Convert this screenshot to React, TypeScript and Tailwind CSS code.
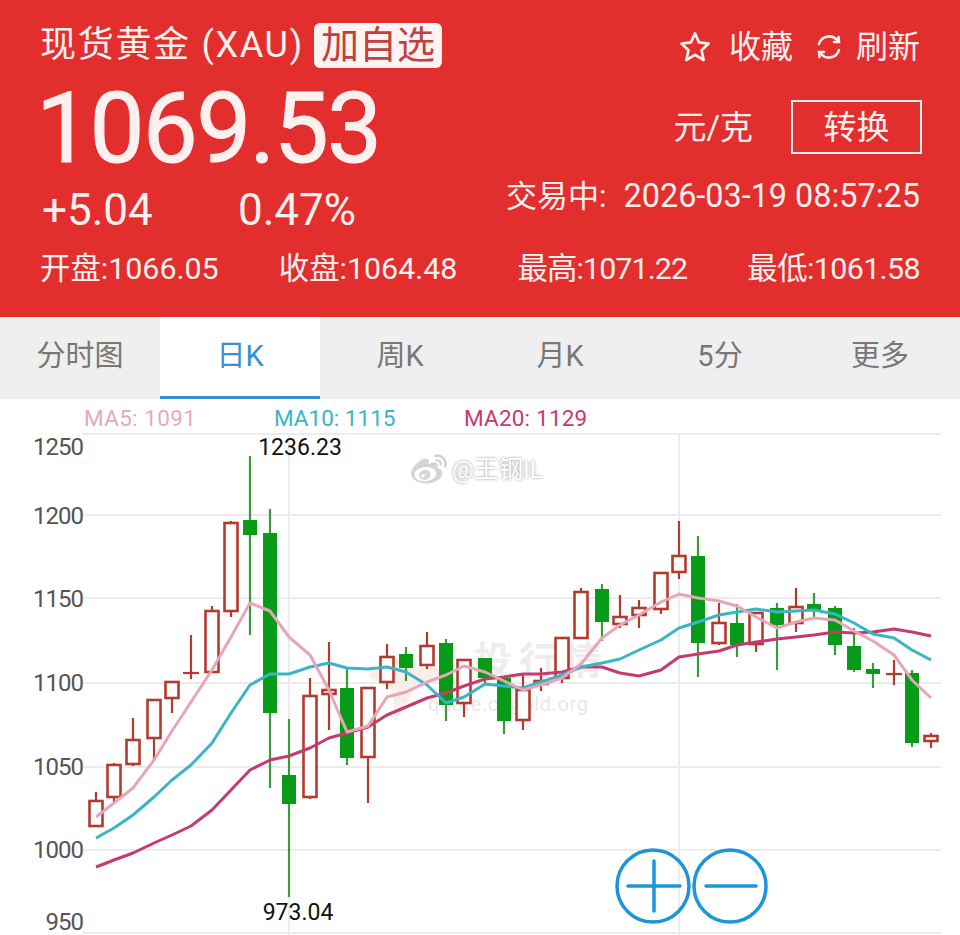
import React from 'react';
import { FaWeibo } from 'react-icons/fa';

type Candle = [number, number, number, number, number, 'r' | 'g'];

// x, bodyTop, bodyBottom, wickTop, wickBottom, colour
const candles: Candle[] = [
  [96, 801, 826, 792, 826, 'r'],
  [114, 765, 797, 763, 802, 'r'],
  [133, 740, 764, 718, 766, 'r'],
  [154, 700, 738, 699, 760, 'r'],
  [172, 682, 698, 681, 713, 'r'],
  [191, 673, 673, 635, 679, 'r'],
  [212, 611, 672, 606, 672, 'r'],
  [231, 523, 611, 521, 617, 'r'],
  [250, 520, 535, 456, 635, 'g'],
  [270, 533, 713, 509, 788, 'g'],
  [289, 775, 804, 719, 897, 'g'],
  [310, 696, 797, 678, 799, 'r'],
  [329, 690, 694, 642, 730, 'r'],
  [347, 688, 758, 668, 765, 'g'],
  [368, 688, 757, 688, 803, 'r'],
  [387, 657, 682, 644, 689, 'r'],
  [406, 654, 668, 647, 681, 'g'],
  [427, 646, 665, 632, 669, 'r'],
  [446, 643, 705, 639, 721, 'g'],
  [464, 660, 703, 659, 717, 'r'],
  [485, 658, 678, 658, 685, 'g'],
  [504, 678, 721, 677, 734, 'g'],
  [523, 690, 720, 673, 730, 'r'],
  [541, 681, 684, 668, 691, 'r'],
  [562, 638, 678, 637, 683, 'r'],
  [581, 592, 638, 588, 638, 'r'],
  [602, 589, 622, 584, 641, 'g'],
  [620, 617, 624, 595, 628, 'r'],
  [639, 608, 615, 600, 628, 'r'],
  [661, 573, 609, 573, 614, 'r'],
  [679, 556, 572, 521, 579, 'r'],
  [698, 556, 643, 536, 677, 'g'],
  [719, 623, 643, 603, 645, 'r'],
  [737, 623, 645, 604, 657, 'g'],
  [756, 613, 644, 613, 652, 'r'],
  [777, 608, 625, 603, 670, 'g'],
  [796, 607, 623, 588, 632, 'r'],
  [814, 604, 611, 593, 618, 'g'],
  [835, 608, 645, 606, 655, 'g'],
  [854, 646, 670, 628, 672, 'g'],
  [873, 669, 674, 663, 688, 'g'],
  [894, 674, 674, 660, 685, 'r'],
  [912, 673, 743, 670, 747, 'g'],
  [931, 736, 741, 733, 748, 'r'],
];

const ma5 =
  '96,817 114,803 133,788 154,760 172,731 191,702 212,670 231,637 250,603 270,611 289,637 310,655 329,690 347,732 368,726 387,697 406,692 427,682 446,675 464,666 485,672 504,681 523,690 541,685 562,678 581,664 602,638 620,625 639,615 661,602 679,594 698,598 719,601 737,606 756,617 777,628 796,622 814,618 835,620 854,631 873,641 894,655 912,680 931,698';
const ma10 =
  '96,838 114,828 133,815 154,797 172,780 191,765 212,743 231,713 250,685 270,674 289,674 310,667 329,663 347,668 368,669 387,667 406,672 427,685 446,703 464,697 485,684 504,686 523,688 541,682 562,675 581,667 602,663 620,659 639,650 661,640 679,628 698,622 719,615 737,612 756,609 777,612 796,611 814,610 835,614 854,623 873,634 894,638 912,650 931,660';
const ma20 =
  '96,867 114,860 133,853 154,843 172,835 191,826 212,810 231,790 250,770 270,760 289,756 310,748 329,738 347,733 368,727 387,715 406,707 427,698 446,693 464,686 485,679 504,677 523,674 541,674 562,672 581,667 602,667 620,673 639,676 661,670 679,657 698,654 719,651 737,645 756,642 777,639 796,637 814,635 835,632 854,633 873,632 894,629 912,632 931,636';

const axis: [string, number][] = [
  ['1250', 446],
  ['1200', 515],
  ['1150', 598],
  ['1100', 682],
  ['1050', 766],
  ['1000', 849],
  ['950', 921],
];

const grid = [434, 515, 598, 683, 767, 850, 933];
const tabs = ['分时图', '日K', '周K', '月K', '5分', '更多'];
const stats = [
  { text: '开盘:1066.05', cls: '' },
  { text: '收盘:1064.48', cls: '' },
  { text: '最高:1071.22', cls: 'tracking-[-0.9px]' },
  { text: '最低:1061.58', cls: 'tracking-[-0.6px]' },
];

const Chart: React.FC = () => (
  <svg viewBox="0 433 960 502" className="block w-[960px] h-[502px]">
    {/* watermark */}
    <path d="M368 676 L392 655 L418 668 L470 668 L415 690 L395 722 L392 690 Z" fill="#fbeee9" />
    <text x="474" y="674" fontSize="38" fontWeight="700" letterSpacing="7" fill="#efecec">投行情</text>
    <text x="428" y="711" fontSize="20" letterSpacing="0.6" fill="#ebe8e8">quote.cngold.org</text>

    {grid.map((y) => (
      <line key={y} x1="82" x2="941" y1={y} y2={y} stroke="#ececec" strokeWidth="2" />
    ))}
    <line x1="289" x2="289" y1="433" y2="935" stroke="#ececec" strokeWidth="2" />
    <line x1="679" x2="679" y1="433" y2="935" stroke="#ececec" strokeWidth="2" />

    {axis.map(([label, y]) => (
      <text key={label} x="83" y={y + 9} textAnchor="end" fontSize="24" letterSpacing="-1" fill="#555555">{label}</text>
    ))}

    {candles.map(([x, top, bottom, wickTop, wickBottom, colour]) =>
      colour === 'g' ? (
        <g key={x}>
          <line x1={x} x2={x} y1={wickTop} y2={wickBottom} stroke="#3c9a3c" strokeWidth="2.2" />
          <rect x={x - 7} y={top} width="14" height={bottom - top} fill="#079b17" />
        </g>
      ) : top === bottom ? (
        <g key={x} stroke="#b53a2e" strokeWidth="2.2">
          <line x1={x} x2={x} y1={wickTop} y2={wickBottom} />
          <line x1={x - 8} x2={x + 8} y1={top} y2={top} />
        </g>
      ) : (
        <g key={x}>
          <line x1={x} x2={x} y1={wickTop} y2={top} stroke="#b53a2e" strokeWidth="2.2" />
          <line x1={x} x2={x} y1={bottom} y2={wickBottom} stroke="#b53a2e" strokeWidth="2.2" />
          <rect x={x - 6.5} y={top} width="13" height={bottom - top} fill="#ffffff" stroke="#b53a2e" strokeWidth="2.6" />
        </g>
      )
    )}

    <polyline points={ma20} fill="none" stroke="#c63a70" strokeWidth="3" strokeLinejoin="round" />
    <polyline points={ma10} fill="none" stroke="#3ab5c6" strokeWidth="3" strokeLinejoin="round" />
    <polyline points={ma5} fill="none" stroke="#e6a6ba" strokeWidth="3" strokeLinejoin="round" />

    <text x="300" y="455" textAnchor="middle" fontSize="23" fill="#111111">1236.23</text>
    <text x="298" y="920" textAnchor="middle" fontSize="23" fill="#111111">973.04</text>

    {/* zoom buttons */}
    <g fill="none" stroke="#1c96d8" strokeWidth="3.5">
      <circle cx="653" cy="886" r="36" />
      <circle cx="730" cy="886" r="36" />
      <path d="M628 886 H680 M654 861 V911" strokeLinecap="round" />
      <path d="M706 886 H756" strokeLinecap="round" />
    </g>
  </svg>
);

const App: React.FC = () => {
  return (
    <div className="relative w-[960px] h-[935px] overflow-hidden bg-white font-['Roboto','Noto_Sans_CJK_SC',sans-serif]">
      {/* Header */}
      <div className="h-[317px] bg-[#e32e2e] px-10 text-[#fdf0ef]">
        <div className="flex justify-between">
          <div>
            <div className="flex items-center h-[50px] mt-5">
              <span className="text-[36px] tracking-[1.7px] leading-none">现货黄金 (XAU)</span>
              <span className="ml-[10px] h-[45px] w-[128px] rounded-md bg-[#fdf3f2] text-[#c0413f] text-[38px] leading-[45px] text-center">加自选</span>
            </div>
            <div className="mt-[8px] -ml-1 h-[102px] text-[98px] leading-[102px] tracking-[-1.7px] [-webkit-text-stroke:1px_#fdf0ef]">1069.53</div>
            <div className="mt-[5px] flex text-[44px] leading-[50px]">
              <span className="w-[198px] pl-[2px]">+5.04</span>
              <span>0.47%</span>
            </div>
          </div>
          <div className="flex flex-col items-end">
            <div className="mt-[24px] flex items-center h-[46px] text-[32px] leading-none">
              <svg viewBox="0 0 30 30" className="w-[34px] h-[34px]" fill="none" stroke="currentColor" strokeWidth="2.4" strokeLinejoin="round">
                <path d="M15 3 L18.6 11 L27 12 L20.8 17.8 L22.6 26.5 L15 22 L7.4 26.5 L9.2 17.8 L3 12 L11.4 11 Z" />
              </svg>
              <span className="ml-[17px]">收藏</span>
              <svg viewBox="0 0 28 28" className="ml-[22px] w-[28px] h-[28px]" fill="none" stroke="currentColor" strokeWidth="2.6" strokeLinecap="round">
                <path d="M4 11 A10.5 10.5 0 0 1 22 7" />
                <path d="M24 17 A10.5 10.5 0 0 1 6 21" />
                <path d="M19 9 L24 9 L23.5 4" />
                <path d="M9 19 L4 19 L4.5 24" />
              </svg>
              <span className="ml-[13px]">刷新</span>
            </div>
            <div className="mt-[30px] -mr-[2px] flex items-center text-[33px] leading-none">
              <span className="mr-[38px]">元/克</span>
              <div className="w-[131px] h-[54px] border-2 border-[#fdf0ef] flex items-center justify-center">转换</div>
            </div>
            <div className="mt-[24px] flex items-center h-[36px] text-[31px] leading-none">
              <span>交易中:</span>
              <span className="ml-[17px] text-[32.4px]">2026-03-19 08:57:25</span>
            </div>
          </div>
        </div>
        <div className="mt-[14px] flex justify-between text-[30.4px] leading-[40px]">
          {stats.map((s) => (
            <span key={s.text} className={s.cls}>{s.text}</span>
          ))}
        </div>
      </div>

      {/* Tabs */}
      <div className="flex h-[82px] bg-[#efefef]">
        {tabs.map((t) => (
          <div
            key={t}
            className={
              t === '日K'
                ? 'flex-1 flex items-center justify-center bg-white border-b-[3px] border-[#3b8fd0] text-[#3a8fd6] text-[29px]'
                : 'flex-1 flex items-center justify-center border-b-[3px] border-transparent text-[#777777] text-[29px]'
            }
          >
            {t}
          </div>
        ))}
      </div>

      {/* Legend */}
      <div className="flex h-[34px] items-center pt-1 pl-[84px] text-[22.5px] leading-none">
        <span className="w-[190px] text-[#e8a9bd] tracking-[0.4px]">MA5: 1091</span>
        <span className="w-[190px] text-[#3ab5c6]">MA10: 1115</span>
        <span className="text-[#c63a70] tracking-[0.2px]">MA20: 1129</span>
      </div>

      <Chart />

      {/* Weibo watermark */}
      <div className="absolute left-[411px] top-[452px] flex items-center text-white text-[24.5px] leading-none [text-shadow:0_0_3px_#8a8a8a]">
        <FaWeibo className="w-[36px] h-[36px] text-[#d4d4d4]" />
        <span className="ml-[5px]">@王钢IL</span>
      </div>
    </div>
  );
};

export default App;
